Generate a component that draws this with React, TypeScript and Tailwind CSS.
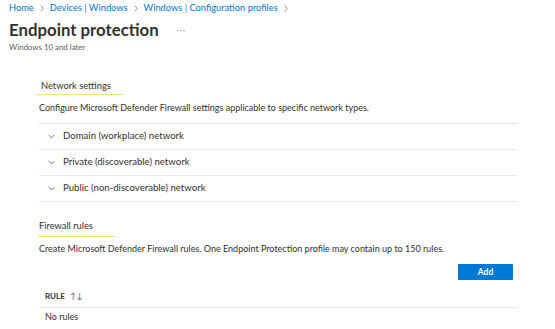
import React from "react";

const Chevron = () => (
  <svg width="7" height="5" viewBox="0 0 7 5" fill="none" className="shrink-0">
    <path d="M0.6 1 L3.5 3.9 L6.4 1" stroke="#605e5c" strokeWidth="0.9" />
  </svg>
);

const Sep = () => (
  <svg width="4" height="7" viewBox="0 0 4 7" fill="none" className="mx-[6px]">
    <path d="M0.7 0.7 L3.3 3.5 L0.7 6.3" stroke="#8a8886" strokeWidth="0.9" />
  </svg>
);

export default function App() {
  return (
    <div
      className="w-[555px] h-[329px] bg-white overflow-hidden text-[#323130]"
      style={{ fontFamily: 'Lato, "Noto Sans", sans-serif' }}
    >
      <div className="pl-[9px] flex flex-col items-start">
        <div className="flex items-center text-[9.3px] text-[#0078d4] h-[16px] leading-[16px]">
          <span>Home</span>
          <Sep />
          <span>Devices | Windows</span>
          <Sep />
          <span>Windows | Configuration profiles</span>
          <Sep />
        </div>
        <div className="flex items-center mt-[3px] h-[22px]">
          <span className="text-[16.8px] font-bold text-[#323130] leading-[22px]">Endpoint protection</span>
          <span className="ml-[18px] text-[8px] text-[#8a8886] tracking-[1px] leading-none">···</span>
        </div>
        <div className="text-[7.9px] text-[#605e5c] leading-[10px] mt-[1px]">Windows 10 and later</div>
      </div>

      <div className="pl-[39px] pr-[38px] flex flex-col">
        <div className="flex flex-col items-start mt-[28px]">
          <div className="text-[9.3px] leading-[12px] pl-[2px]">Network settings</div>
          <div className="h-[1px] bg-[#f3e27c] -ml-[4px] w-[88px] mt-[2px]" />
        </div>
        <div className="text-[9px] text-[#323130] mt-[7px] leading-[12px]">
          Configure Microsoft Defender Firewall settings applicable to specific network types.
        </div>
        <div className="mt-[9px] border-t border-[#e1dfdd]">
          {["Domain (workplace) network", "Private (discoverable) network", "Public (non-discoverable) network"].map(
            (t) => (
              <div
                key={t}
                className="flex items-center h-[26px] border-b border-[#edebe9] pl-[9px] gap-[8px] text-[9.6px] text-[#323130]"
              >
                <Chevron />
                <span>{t}</span>
              </div>
            )
          )}
        </div>

        <div className="flex flex-col items-start mt-[18px]">
          <div className="text-[9.3px] leading-[12px]">Firewall rules</div>
          <div className="h-[1px] bg-[#f3e27c] -ml-[1px] w-[77px] mt-[4px]" />
        </div>
        <div className="text-[9px] mt-[6px] leading-[12px]">
          Create Microsoft Defender Firewall rules. One Endpoint Protection profile may contain up to 150 rules.
        </div>
        <div className="flex justify-end mt-[9px]">
          <button className="w-[55px] h-[16px] bg-[#0078d4] text-white text-[8.5px] font-bold rounded-[1px] mr-[4px] leading-[16px]">
            Add
          </button>
        </div>
        <div className="mt-[5px] flex items-center h-[23px] pl-[6px] border-b border-[#edebe9] text-[8px] font-bold">
          <span>RULE</span>
          <span className="ml-[5px] text-[8.5px] font-normal text-[#605e5c]">↑↓</span>
        </div>
        <div className="pl-[6px] text-[9px] leading-[18px]">No rules</div>
      </div>
    </div>
  );
}
